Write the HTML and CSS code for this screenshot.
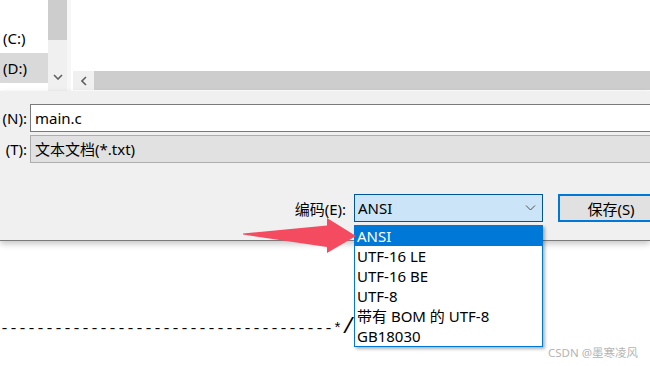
FILE: index.html
```html
<!DOCTYPE html>
<html lang="zh-CN">
<head>
    <meta charset="UTF-8">
    <title>另存为</title>
    <link rel="stylesheet" href="styles.css">
</head>
<body>
    <div class="explorer">
        <div class="nav-pane">
            <div class="nav-item">(C:)</div>
            <div class="nav-item selected">(D:)</div>
        </div>
        <div class="vscroll">
            <div class="vthumb"></div>
            <div class="vtrack"></div>
            <div class="vbtn">
                <svg width="10" height="6" viewBox="0 0 10 6"><path d="M1 1 L5 5 L9 1" fill="none" stroke="#606060" stroke-width="1.6"/></svg>
            </div>
        </div>
        <div class="splitter"></div>
        <div class="file-pane">
            <div class="hscroll">
                <div class="hbtn">
                    <svg width="6" height="10" viewBox="0 0 6 10"><path d="M5 1 L1 5 L5 9" fill="none" stroke="#606060" stroke-width="1.6"/></svg>
                </div>
                <div class="hthumb"></div>
            </div>
        </div>
    </div>

    <div class="dialog">
        <div class="field-row">
            <div class="field-label">(N):</div>
            <div class="text-input">main.c</div>
        </div>
        <div class="field-row">
            <div class="field-label">(T):</div>
            <div class="type-select">文本文档(*.txt)</div>
        </div>
        <div class="footer">
            <div class="enc-label">编码(E):</div>
            <div class="enc-combo">
                <span>ANSI</span>
                <svg width="11" height="6" viewBox="0 0 11 6"><path d="M1 0.5 L5.5 5 L10 0.5" fill="none" stroke="#505050" stroke-width="1"/></svg>
            </div>
            <div class="save-btn">保存(S)</div>
        </div>
    </div>

    <div class="editor">-------------------------------------*<span class="slash">/</span></div>

    <ul class="enc-list">
        <li class="active">ANSI</li>
        <li>UTF-16 LE</li>
        <li>UTF-16 BE</li>
        <li>UTF-8</li>
        <li>带有 BOM 的 UTF-8</li>
        <li>GB18030</li>
    </ul>

    <svg class="pointer" width="650" height="366" viewBox="0 0 650 366">
        <polygon points="243,233.5 327,225.5 327,218 356,236 327,253 327,247 243,234.5" fill="#f44b60"/>
    </svg>

    <div class="watermark">CSDN @墨寒凌风</div>
</body>
</html>
```

FILE: styles.css
```css
body {
    margin: 0;
    width: 650px;
    height: 366px;
    overflow: hidden;
    position: relative;
    background-color: #fff;
    font-family: "Noto Sans", "Noto Sans CJK SC", sans-serif;
    font-size: 15px;
    color: #000;
}
.explorer {
    display: flex;
    height: 91px;
    background-color: #fff;
}
.nav-pane {
    width: 48px;
    padding-top: 24px;
    box-sizing: border-box;
    overflow: hidden;
}
.nav-item {
    height: 29px;
    line-height: 29px;
    padding-left: 3px;
    white-space: nowrap;
}
.nav-item.selected {
    height: 30px;
    line-height: 30px;
    background-color: #d9d9d9;
}
.vscroll {
    width: 19px;
    display: flex;
    flex-direction: column;
    background-color: #f0f0f0;
}
.vthumb {
    height: 40px;
    background-color: #cdcdcd;
}
.vtrack {
    flex: 1;
}
.vbtn {
    height: 18px;
    margin-bottom: 5px;
    display: flex;
    align-items: center;
    justify-content: center;
}
.splitter {
    width: 4px;
    background-color: #f7f7f7;
}
.file-pane {
    flex: 1;
    display: flex;
    flex-direction: column;
    justify-content: flex-end;
}
.hscroll {
    height: 19px;
    margin: 0 0 1px 2px;
    display: flex;
}
.hbtn {
    width: 21px;
    background-color: #f0f0f0;
    display: flex;
    align-items: center;
    justify-content: center;
}
.hthumb {
    flex: 1;
    background-color: #cdcdcd;
}
.dialog {
    position: relative;
    z-index: 1;
    background-color: #f0f0f0;
    padding: 13px 0 18px;
    border-bottom: 1px solid #7a7a7a;
    box-shadow: 0 3px 6px rgba(0, 0, 0, 0.22);
}
.field-row {
    display: flex;
    align-items: center;
    height: 28px;
    margin-bottom: 3px;
}
.field-label {
    width: 27px;
    margin-right: 3px;
    text-align: right;
    white-space: nowrap;
}
.text-input, .type-select {
    flex: 1;
    height: 28px;
    line-height: 26px;
    box-sizing: border-box;
    padding-left: 4px;
    margin-right: -20px;
}
.text-input {
    background-color: #fff;
    border: 1px solid #7a7a7a;
}
.type-select {
    background-color: #e1e1e1;
    border: 1px solid #adadad;
}
.footer {
    display: flex;
    justify-content: flex-end;
    align-items: center;
    margin-top: 31px;
    margin-right: -14px;
    height: 28px;
}
.enc-label {
    margin-right: 8px;
}
.enc-combo {
    width: 189px;
    height: 28px;
    box-sizing: border-box;
    border: 1px solid #005499;
    background-color: #cce4f7;
    padding: 0 6px 0 3px;
    display: flex;
    align-items: center;
    justify-content: space-between;
    margin-right: 15px;
}
.save-btn {
    width: 106px;
    height: 28px;
    box-sizing: border-box;
    border: 2px solid #0078d7;
    background-color: #e1e1e1;
    display: flex;
    align-items: center;
    justify-content: center;
}
.editor {
    padding-top: 77px;
    font-family: "Liberation Mono", monospace;
    font-size: 15px;
    line-height: 20px;
    white-space: pre;
}
.slash {
    font-size: 22px;
    line-height: 20px;
}
.enc-list {
    position: absolute;
    left: 354px;
    top: 225px;
    width: 189px;
    box-sizing: border-box;
    margin: 0;
    padding: 0;
    list-style: none;
    background-color: #fff;
    border: 1px solid #0078d7;
    box-shadow: 2px 2px 3px rgba(0, 0, 0, 0.3);
    z-index: 2;
}
.enc-list li {
    height: 20px;
    line-height: 20px;
    padding-left: 2px;
    white-space: nowrap;
}
.enc-list li.active {
    background-color: #0078d7;
    color: #fff;
}
.pointer {
    position: absolute;
    left: 0;
    top: 0;
    z-index: 3;
    pointer-events: none;
}
.watermark {
    position: absolute;
    left: 548px;
    top: 344px;
    font-size: 11.5px;
    color: #b4b4b4;
    white-space: nowrap;
}
```
